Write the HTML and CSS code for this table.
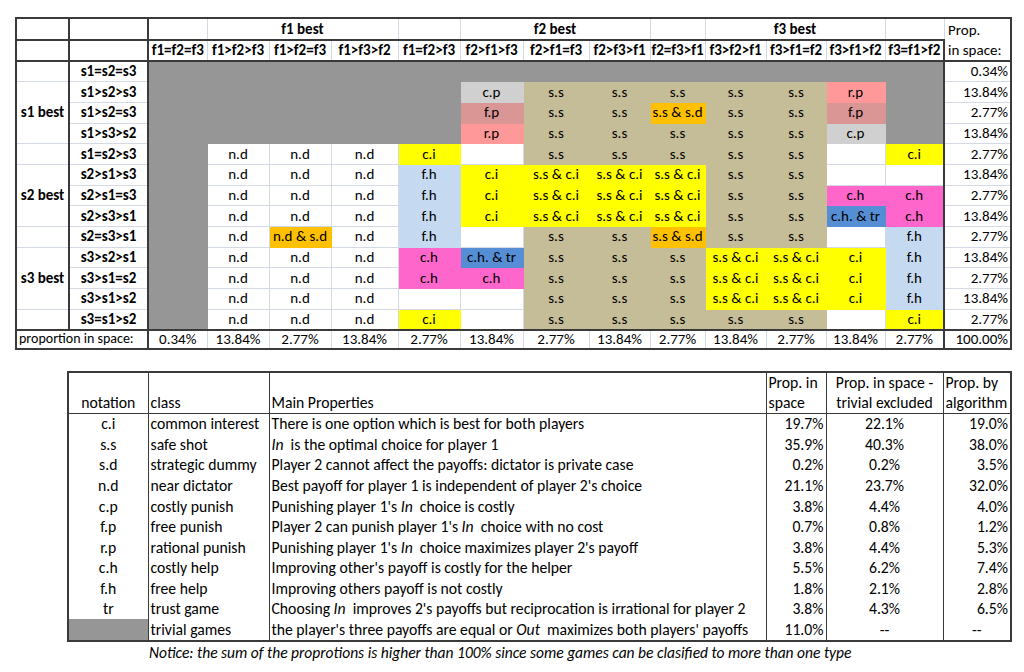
FILE: index.html
```html
<!DOCTYPE html>
<html>
<head>
<meta charset="utf-8">
<link rel="stylesheet" href="styles.css">
</head>
<body>
<table class="grid">
<colgroup>
<col class="w53"><col class="w79"><col class="w59"><col class="w62"><col class="w62"><col class="w67"><col class="w62"><col class="w63"><col class="w66"><col class="w61"><col class="w55"><col class="w61"><col class="w60"><col class="w59"><col class="w59"><col class="w67">
</colgroup>
<tr class="h1">
<td class="c1"></td><td class="c2"></td><td></td><td colspan="3" class="b">f1 best</td><td></td><td colspan="3" class="b">f2 best</td><td></td><td colspan="3" class="b">f3 best</td><td></td><td rowspan="2" class="pt">Prop.<br>in space:</td>
</tr>
<tr class="h2">
<td class="c1"></td><td class="c2"></td><td class="b">f1=f2=f3</td><td class="b">f1&gt;f2&gt;f3</td><td class="b">f1&gt;f2=f3</td><td class="b">f1&gt;f3&gt;f2</td><td class="b">f1=f2&gt;f3</td><td class="b">f2&gt;f1&gt;f3</td><td class="b">f2&gt;f1=f3</td><td class="b">f2&gt;f3&gt;f1</td><td class="b">f2=f3&gt;f1</td><td class="b">f3&gt;f2&gt;f1</td><td class="b">f3&gt;f1=f2</td><td class="b">f3&gt;f1&gt;f2</td><td class="b mm">f3=f1&gt;f2</td>
</tr>
<tr class="r">
<td class="c1"></td><td class="c2 b">s1=s2=s3</td><td class="g"></td><td class="g"></td><td class="g"></td><td class="g"></td><td class="g"></td><td class="g"></td><td class="g"></td><td class="g"></td><td class="g"></td><td class="g"></td><td class="g"></td><td class="g"></td><td class="g mm"></td><td class="p">0.34%</td>
</tr>
<tr class="r">
<td class="c1 b" rowspan="3">s1 best</td><td class="c2 b">s1&gt;s2&gt;s3</td><td class="g"></td><td class="g"></td><td class="g"></td><td class="g"></td><td class="g"></td><td class="cp">c.p</td><td class="t">s.s</td><td class="t">s.s</td><td class="t">s.s</td><td class="t">s.s</td><td class="t">s.s</td><td class="rp">r.p</td><td class="g mm"></td><td class="p">13.84%</td>
</tr>
<tr class="r">
<td class="c2 b">s1&gt;s2=s3</td><td class="g"></td><td class="g"></td><td class="g"></td><td class="g"></td><td class="g"></td><td class="fp">f.p</td><td class="t">s.s</td><td class="t">s.s</td><td class="o">s.s &amp; s.d</td><td class="t">s.s</td><td class="t">s.s</td><td class="fp">f.p</td><td class="g mm"></td><td class="p">2.77%</td>
</tr>
<tr class="r">
<td class="c2 b">s1&gt;s3&gt;s2</td><td class="g"></td><td class="g"></td><td class="g"></td><td class="g"></td><td class="g"></td><td class="rp">r.p</td><td class="t">s.s</td><td class="t">s.s</td><td class="t">s.s</td><td class="t">s.s</td><td class="t">s.s</td><td class="cp">c.p</td><td class="g mm"></td><td class="p">13.84%</td>
</tr>
<tr class="r">
<td class="c1"></td><td class="c2 b">s1=s2&gt;s3</td><td class="g"></td><td>n.d</td><td>n.d</td><td>n.d</td><td class="y">c.i</td><td></td><td class="t">s.s</td><td class="t">s.s</td><td class="t">s.s</td><td class="t">s.s</td><td class="t">s.s</td><td></td><td class="y mm">c.i</td><td class="p">2.77%</td>
</tr>
<tr class="r">
<td class="c1 b" rowspan="3">s2 best</td><td class="c2 b">s2&gt;s1&gt;s3</td><td class="g"></td><td>n.d</td><td>n.d</td><td>n.d</td><td class="lb">f.h</td><td class="y">c.i</td><td class="y">s.s &amp; c.i</td><td class="y">s.s &amp; c.i</td><td class="y">s.s &amp; c.i</td><td class="t">s.s</td><td class="t">s.s</td><td></td><td class="mm"></td><td class="p">13.84%</td>
</tr>
<tr class="r">
<td class="c2 b">s2&gt;s1=s3</td><td class="g"></td><td>n.d</td><td>n.d</td><td>n.d</td><td class="lb">f.h</td><td class="y">c.i</td><td class="y">s.s &amp; c.i</td><td class="y">s.s &amp; c.i</td><td class="y">s.s &amp; c.i</td><td class="t">s.s</td><td class="t">s.s</td><td class="pk">c.h</td><td class="pk mm">c.h</td><td class="p">2.77%</td>
</tr>
<tr class="r">
<td class="c2 b">s2&gt;s3&gt;s1</td><td class="g"></td><td>n.d</td><td>n.d</td><td>n.d</td><td class="lb">f.h</td><td class="y">c.i</td><td class="y">s.s &amp; c.i</td><td class="y">s.s &amp; c.i</td><td class="y">s.s &amp; c.i</td><td class="t">s.s</td><td class="t">s.s</td><td class="bl">c.h. &amp; tr</td><td class="pk mm">c.h</td><td class="p">13.84%</td>
</tr>
<tr class="r">
<td class="c1"></td><td class="c2 b">s2=s3&gt;s1</td><td class="g"></td><td>n.d</td><td class="o">n.d &amp; s.d</td><td>n.d</td><td class="lb">f.h</td><td></td><td class="t">s.s</td><td class="t">s.s</td><td class="o">s.s &amp; s.d</td><td class="t">s.s</td><td class="t">s.s</td><td></td><td class="lb mm">f.h</td><td class="p">2.77%</td>
</tr>
<tr class="r">
<td class="c1 b" rowspan="3">s3 best</td><td class="c2 b">s3&gt;s2&gt;s1</td><td class="g"></td><td>n.d</td><td>n.d</td><td>n.d</td><td class="pk">c.h</td><td class="bl">c.h. &amp; tr</td><td class="t">s.s</td><td class="t">s.s</td><td class="t">s.s</td><td class="y">s.s &amp; c.i</td><td class="y">s.s &amp; c.i</td><td class="y">c.i</td><td class="lb mm">f.h</td><td class="p">13.84%</td>
</tr>
<tr class="r">
<td class="c2 b">s3&gt;s1=s2</td><td class="g"></td><td>n.d</td><td>n.d</td><td>n.d</td><td class="pk">c.h</td><td class="pk">c.h</td><td class="t">s.s</td><td class="t">s.s</td><td class="t">s.s</td><td class="y">s.s &amp; c.i</td><td class="y">s.s &amp; c.i</td><td class="y">c.i</td><td class="lb mm">f.h</td><td class="p">2.77%</td>
</tr>
<tr class="r">
<td class="c2 b">s3&gt;s1&gt;s2</td><td class="g"></td><td>n.d</td><td>n.d</td><td>n.d</td><td></td><td></td><td class="t">s.s</td><td class="t">s.s</td><td class="t">s.s</td><td class="y">s.s &amp; c.i</td><td class="y">s.s &amp; c.i</td><td class="y">c.i</td><td class="lb mm">f.h</td><td class="p">13.84%</td>
</tr>
<tr class="r">
<td class="c1"></td><td class="c2 b">s3=s1&gt;s2</td><td class="g"></td><td>n.d</td><td>n.d</td><td>n.d</td><td class="y">c.i</td><td></td><td class="t">s.s</td><td class="t">s.s</td><td class="t">s.s</td><td class="t">s.s</td><td class="t">s.s</td><td></td><td class="y mm">c.i</td><td class="p">2.77%</td>
</tr>
<tr class="tot">
<td colspan="2" class="c2 lt">proportion in space:</td><td>0.34%</td><td>13.84%</td><td>2.77%</td><td>13.84%</td><td>2.77%</td><td>13.84%</td><td>2.77%</td><td>13.84%</td><td>2.77%</td><td>13.84%</td><td>2.77%</td><td>13.84%</td><td class="mm">2.77%</td><td class="p">100.00%</td>
</tr>
</table>

<table class="legend">
<colgroup>
<col class="w80"><col class="w121"><col class="w497"><col class="w60"><col class="w117"><col class="w68">
</colgroup>
<tr class="lh">
<td class="ctr">notation</td><td class="lft">class</td><td class="lft">Main Properties</td><td class="lft">Prop. in<br>space</td><td class="ctr">Prop. in space -<br>trivial excluded</td><td class="lft">Prop. by<br>algorithm</td>
</tr>
<tr><td class="ctr">c.i</td><td class="lft">common interest</td><td class="lft">There is one option which is best for both players</td><td class="rt">19.7%</td><td class="ctr">22.1%</td><td class="rt">19.0%</td></tr>
<tr><td class="ctr">s.s</td><td class="lft">safe shot</td><td class="lft"><i>In</i>&nbsp; is the optimal choice for player 1</td><td class="rt">35.9%</td><td class="ctr">40.3%</td><td class="rt">38.0%</td></tr>
<tr><td class="ctr">s.d</td><td class="lft">strategic dummy</td><td class="lft">Player 2 cannot affect the payoffs: dictator is private case</td><td class="rt">0.2%</td><td class="ctr">0.2%</td><td class="rt">3.5%</td></tr>
<tr><td class="ctr">n.d</td><td class="lft">near dictator</td><td class="lft">Best payoff for player 1 is independent of player 2's choice</td><td class="rt">21.1%</td><td class="ctr">23.7%</td><td class="rt">32.0%</td></tr>
<tr><td class="ctr">c.p</td><td class="lft">costly punish</td><td class="lft">Punishing player 1's <i>In</i>&nbsp; choice is costly</td><td class="rt">3.8%</td><td class="ctr">4.4%</td><td class="rt">4.0%</td></tr>
<tr><td class="ctr">f.p</td><td class="lft">free punish</td><td class="lft">Player 2 can punish player 1's <i>In</i>&nbsp; choice with no cost</td><td class="rt">0.7%</td><td class="ctr">0.8%</td><td class="rt">1.2%</td></tr>
<tr><td class="ctr">r.p</td><td class="lft">rational punish</td><td class="lft">Punishing player 1's <i>In</i>&nbsp; choice maximizes player 2's payoff</td><td class="rt">3.8%</td><td class="ctr">4.4%</td><td class="rt">5.3%</td></tr>
<tr><td class="ctr">c.h</td><td class="lft">costly help</td><td class="lft">Improving other's payoff is costly for the helper</td><td class="rt">5.5%</td><td class="ctr">6.2%</td><td class="rt">7.4%</td></tr>
<tr><td class="ctr">f.h</td><td class="lft">free help</td><td class="lft">Improving others payoff is not costly</td><td class="rt">1.8%</td><td class="ctr">2.1%</td><td class="rt">2.8%</td></tr>
<tr><td class="ctr">tr</td><td class="lft">trust game</td><td class="lft">Choosing <i>In</i>&nbsp; improves 2's payoffs but reciprocation is irrational for player 2</td><td class="rt">3.8%</td><td class="ctr">4.3%</td><td class="rt">6.5%</td></tr>
<tr><td class="ctr gcell"></td><td class="lft">trivial games</td><td class="lft">the player's three payoffs are equal or <i>Out</i>&nbsp; maximizes both players' payoffs</td><td class="rt">11.0%</td><td class="ctr">--</td><td class="ctr">--</td></tr>
</table>
<p class="notice">Notice: the sum of the proprotions is higher than 100% since some games can be clasified to more than one type</p>
</body>
</html>
```

FILE: styles.css
```css
html, body {
  margin: 0;
  padding: 0;
  background: #ffffff;
}
body {
  font-family: Carlito, Lato, "Liberation Sans", sans-serif;
  font-size: 15px;
  color: #000;
}
table {
  border-collapse: collapse;
  table-layout: fixed;
}
td {
  padding: 0;
  white-space: nowrap;
  overflow: hidden;
  line-height: 1;
}
.w53 { width: 53px; } .w79 { width: 79px; } .w59 { width: 59px; } .w62 { width: 62px; }
.w67 { width: 67px; } .w63 { width: 63px; } .w66 { width: 66px; } .w61 { width: 61px; }
.w55 { width: 55px; } .w60 { width: 60px; } .w80 { width: 80px; } .w121 { width: 121px; }
.w497 { width: 497px; } .w117 { width: 117px; } .w68 { width: 68px; }

.grid {
  width: 995px;
  margin: 17px 0 0 15px;
  border: 2px solid #3a3a3a;
  font-size: 15px;
}
.grid td {
  border: 1px solid #d3dae6;
  text-align: center;
  vertical-align: middle;
}
.grid .h1 { height: 19px; }
.grid .h2 { height: 18px; }
.grid .h1 td { border-bottom: 2px solid #3a3a3a; }
.grid .h2 td { border-bottom: 2px solid #3a3a3a; }
.grid .r { height: 20.7px; }
.grid .tot { height: 19px; }
.grid .tot td { border-top: 2px solid #3a3a3a; }
.grid .c1 { border-right: 2px solid #3a3a3a; }
.grid .c2 { border-right: 2px solid #3a3a3a; }
.grid .mm { border-right: 2px solid #3a3a3a; }
.grid .pt {
  text-align: left;
  vertical-align: top;
  padding: 1px 0 0 3px;
  line-height: 20px;
  border-bottom: 2px solid #3a3a3a;
}
.grid .p { text-align: right; padding-right: 2px; }
.grid .lt { text-align: left; padding-left: 2px; font-size: 14px; }
.b { font-weight: bold; }

.grid td.g { background: #969696; border-color: #969696; }
.grid td.t { background: #c4bd97; border-color: #c4bd97; }
.grid td.y { background: #ffff00; border-color: #ffff00; }
.grid td.o { background: #ffc000; border-color: #ffc000; }
.grid td.lb { background: #c5d9f1; border-color: #c5d9f1; }
.grid td.pk { background: #ff66cc; border-color: #ff66cc; }
.grid td.bl { background: #558ed5; border-color: #558ed5; }
.grid td.cp { background: #d0d0d0; border-color: #d0d0d0; }
.grid td.fp { background: #da9694; border-color: #da9694; }
.grid td.rp { background: #ff9999; border-color: #ff9999; }
.grid td.mm { border-right: 2px solid #3a3a3a; }

.legend {
  width: 943px;
  margin: 21px 0 0 67px;
  border: 2px solid #3a3a3a;
  font-size: 15.7px;
}
.legend td {
  border-left: 1px solid #3a3a3a;
  border-right: 1px solid #3a3a3a;
  height: 20.55px;
  vertical-align: middle;
}
.legend .lh td {
  height: 39px;
  vertical-align: bottom;
  line-height: 20px;
  border-bottom: 1px solid #3a3a3a;
}
.legend .ctr { text-align: center; }
.legend .lft { text-align: left; padding-left: 2px; }
.legend .rt { text-align: right; padding-right: 2px; }
.legend .gcell { background: #969696; }

.notice {
  margin: 1px 0 0 149px;
  font-size: 15.5px;
  font-style: italic;
  line-height: 20px;
}
```
